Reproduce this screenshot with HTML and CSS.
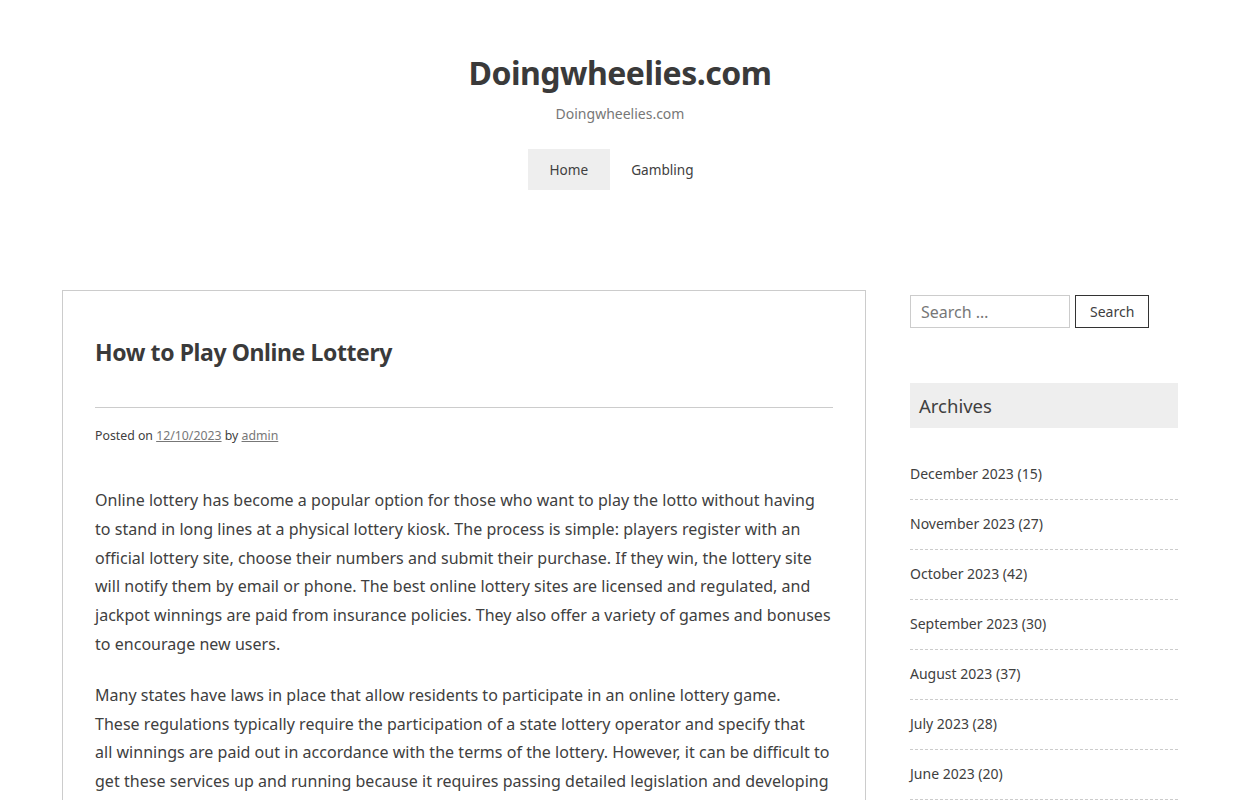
FILE: index.html
```html
<!DOCTYPE html>
<html lang="en">
<head>
  <meta charset="UTF-8">
  <meta name="viewport" content="width=device-width, initial-scale=1.0">
  <title>Doingwheelies.com</title>
  <link rel="stylesheet" href="styles.css">
</head>
<body>
  <header class="site-header">
    <h1 class="site-title">Doingwheelies.com</h1>
    <p class="site-desc">Doingwheelies.com</p>
    <nav class="main-nav">
      <a href="#" class="current">Home</a>
      <a href="#">Gambling</a>
    </nav>
  </header>

  <div class="container">
    <main class="content">
      <article class="post">
        <h2 class="post-title">How to Play Online Lottery</h2>
        <div class="post-meta">
          Posted on <a href="#">12/10/2023</a> by <a href="#">admin</a>
        </div>
        <p>Online lottery has become a popular option for those who want to play the lotto without having to stand in long lines at a physical lottery kiosk. The process is simple: players register with an official lottery site, choose their numbers and submit their purchase. If they win, the lottery site will notify them by email or phone. The best online lottery sites are licensed and regulated, and jackpot winnings are paid from insurance policies. They also offer a variety of games and bonuses to encourage new users.</p>
        <p>Many states have laws in place that allow residents to participate in an online lottery game. These&nbsp;regulations typically require the participation of a state lottery operator and specify that all&nbsp;winnings are paid out in accordance with the terms of the lottery. However, it can be difficult to get these services up and running because it requires passing detailed legislation and developing</p>
      </article>
    </main>

    <aside class="sidebar">
      <form class="search-form">
        <input type="search" placeholder="Search …">
        <button type="button">Search</button>
      </form>

      <section class="widget">
        <h3 class="widget-title">Archives</h3>
        <ul class="archive-list">
          <li><a href="#">December 2023</a>&nbsp;(15)</li>
          <li><a href="#">November 2023</a>&nbsp;(27)</li>
          <li><a href="#">October 2023</a>&nbsp;(42)</li>
          <li><a href="#">September 2023</a>&nbsp;(30)</li>
          <li><a href="#">August 2023</a>&nbsp;(37)</li>
          <li><a href="#">July 2023</a>&nbsp;(28)</li>
          <li><a href="#">June 2023</a>&nbsp;(20)</li>
        </ul>
      </section>
    </aside>
  </div>
</body>
</html>
```

FILE: styles.css
```css
body {
  font-family: "Noto Sans", "Open Sans", sans-serif;
  margin: 0;
  padding: 0;
  background-color: #fff;
  color: #404040;
}

a {
  color: #404040;
  text-decoration: none;
}

.site-header {
  text-align: center;
  padding-top: 52px;
  padding-bottom: 100px;
}

.site-title {
  font-size: 32px;
  font-weight: 700;
  line-height: 42px;
  margin: 0;
  color: #3a3a3a;
  letter-spacing: -0.5px;
}

.site-desc {
  font-size: 14px;
  color: #777;
  margin: 10px 0 0;
  line-height: 20px;
}

.main-nav {
  display: flex;
  justify-content: center;
  margin-top: 25px;
  padding-left: 3px;
}

.main-nav a {
  font-size: 13.6px;
  line-height: 41px;
  padding: 0 21.5px;
  color: #404040;
}

.main-nav a.current {
  background-color: #eee;
}

.container {
  width: 1116px;
  margin: 0 auto;
  display: flex;
  gap: 44px;
  align-items: flex-start;
}

.content {
  width: 804px;
  flex: none;
}

.post {
  border: 1px solid #ccc;
  padding: 32px 32px 20px;
}

.post-title {
  font-size: 23px;
  font-weight: 700;
  letter-spacing: -0.4px;
  line-height: 36px;
  margin: 11px 0 0;
  padding-bottom: 37px;
  border-bottom: 1px solid #ccc;
  color: #3a3a3a;
}

.post-meta {
  font-size: 12.3px;
  margin-top: 19px;
  margin-bottom: 42px;
  color: #404040;
}

.post-meta a {
  color: #777;
  text-decoration: underline;
}

.post p {
  font-size: 16px;
  line-height: 28.8px;
  letter-spacing: 0.03px;
  margin: 0 0 22px;
  color: #404040;
}

.sidebar {
  width: 268px;
  flex: none;
  padding-top: 5px;
}

.search-form {
  display: flex;
  gap: 5px;
}

.search-form input {
  width: 160px;
  height: 33px;
  box-sizing: border-box;
  border: 1px solid #ccc;
  padding: 0 10px;
  font-family: inherit;
  font-size: 16px;
  color: #404040;
}

.search-form input::placeholder {
  color: #777;
}

.search-form button {
  height: 33px;
  box-sizing: border-box;
  border: 1px solid #333;
  background: #fff;
  padding: 0 14px;
  font-family: inherit;
  font-size: 14px;
  color: #404040;
}

.widget {
  margin-top: 55px;
}

.widget-title {
  background-color: #eee;
  font-size: 18.5px;
  font-weight: 400;
  line-height: 45px;
  margin: 0;
  padding: 0 9px;
  color: #404040;
}

.archive-list {
  list-style: none;
  margin: 34px 0 0;
  padding: 0;
}

.archive-list li {
  font-size: 14px;
  line-height: 20px;
  padding: 14px 0 15px;
  border-bottom: 1px dashed #ccc;
}

.archive-list li:first-child {
  padding-top: 2px;
}
```
